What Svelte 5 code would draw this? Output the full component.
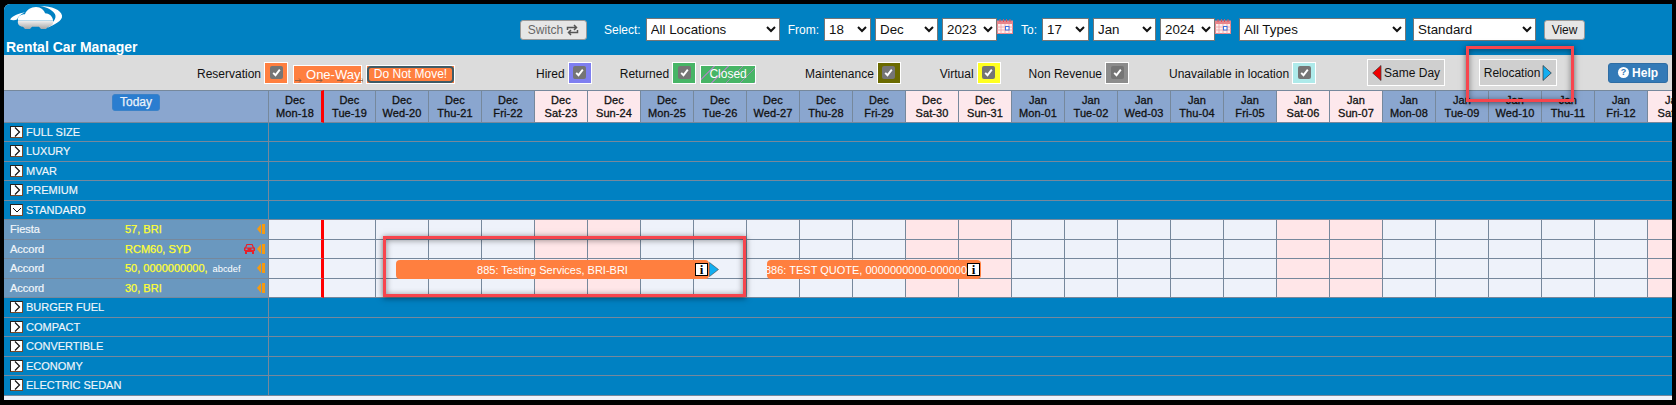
<script lang="ts">
const monthNames = ["Jan", "Feb", "Mar", "Apr", "May", "Jun", "Jul", "Aug", "Sep", "Oct", "Nov", "Dec"]
const dayNames = ["Sun", "Mon", "Tue", "Wed", "Thu", "Fri", "Sat"]

// 27 days from the selected start date, the last one runs off the screen
const days = Array.from({ length: 27 }, (_, i) => {
  const d = new Date(Date.UTC(2023, 11, 18 + i))
  const dow = d.getUTCDay()
  return {
    month: monthNames[d.getUTCMonth()],
    label: `${dayNames[dow]}-${String(d.getUTCDate()).padStart(2, "0")}`,
    weekend: dow === 0 || dow === 6,
  }
})

const before = ["FULL SIZE", "LUXURY", "MVAR", "PREMIUM"]
const after = ["BURGER FUEL", "COMPACT", "CONVERTIBLE", "ECONOMY", "ELECTRIC SEDAN"]
const cars = [
  { name: "Fiesta", info: "57, BRI", note: "", rental: false },
  { name: "Accord", info: "RCM60, SYD", note: "", rental: true },
  { name: "Accord", info: "50, 0000000000,", note: "abcdef", rental: false },
  { name: "Accord", info: "30, BRI", note: "", rental: false },
]

const legend = [
  { label: "Hired", cls: "hired" },
  { label: "Returned", cls: "returned" },
]
</script>

{#snippet check()}
  <span class="check">
    <svg width="9" height="9" viewBox="0 0 9 9"><path d="M1.2 4.8 3.5 7.2 7.8 1.6" fill="none" stroke="#fff" stroke-width="1.9" /></svg>
  </span>
{/snippet}

{#snippet calendar()}
  <svg class="cal" width="16" height="15" viewBox="0 0 16 15">
    <rect x="0.5" y="2" width="15" height="12.500" fill="#fdeeee" stroke="#e8858b" />
    <rect x="0.5" y="2" width="15" height="3" fill="#e8858b" />
    <path d="M3 0v3M6.500 0v3M9.500 0v3M13 0v3" stroke="#d8545c" />
    <path d="M0 8h16M0 11h16M4 5v10M8 5v10M12 5v10" stroke="#ee9ea2" stroke-width="0.8" />
    <rect x="8.500" y="7.500" width="3.500" height="3.500" fill="#fff" stroke="#3a6fe0" />
  </svg>
{/snippet}

{#snippet group(name: string, open: boolean)}
  <div class="group-name">
    <span class="toggle">
      <svg width="10" height="10" viewBox="0 0 10 10">
        {#if open}
          <path d="M1 3 5 7 9 3" fill="none" stroke="#111" stroke-width="1" />
        {:else}
          <path d="M3 0.500 7.500 5 3 9.500" fill="none" stroke="#111" stroke-width="1.200" />
        {/if}
      </svg>
    </span>
    {name}
  </div>
  <div class="group-rest"></div>
{/snippet}

<div class="shell">
  <header class="head">
    <div class="brand">
      <svg class="logo" width="54" height="26" viewBox="0 0 54 24" preserveAspectRatio="none">
        <defs>
          <linearGradient id="carbody" x1="0" y1="0" x2="0" y2="1">
            <stop offset="0" stop-color="#f2f2f2" />
            <stop offset="1" stop-color="#a8a8a8" />
          </linearGradient>
        </defs>
        <path d="M0 13C3 9 9 7 15 6 11 8 8 10 7 13 5 14 2 14 0 13Z" fill="#fff" />
        <path d="M30 0C42 0 51 4 52 9 53 14 44 18 37 21 43 16 47 12 45 8 43 4 37 1 30 0Z" fill="#fff" />
        <path d="M8 14C7 10 11 8 15 8 16 4 21 1 26 1 31 1 34 4 35 7 39 7 43 10 43 14Z" fill="#fff" />
        <path d="M8 14H43C44 18 41 20 38 20L36 22H31L29 20H22L20 22H15L13 20C10 20 7 18 8 14Z" fill="url(#carbody)" />
      </svg>
      <div class="app-name">Rental Car Manager</div>
    </div>

    <button class="btn switch">
      Switch
      <svg width="13" height="12" viewBox="0 0 13 12">
        <path d="M1.500 6V3.500H9.500M8 1 10.500 3.500 8 6M11.500 6V8.500H3.500M5 6 2.500 8.500 5 11" fill="none" stroke="#555" stroke-width="1.500" />
      </svg>
    </button>
    <span class="lbl l-select">Select:</span>
    <select class="s-loc"><option>All Locations</option></select>
    <span class="lbl l-from">From:</span>
    <select class="s-day"><option>18</option></select>
    <select class="s-mon"><option>Dec</option></select>
    <select class="s-year"><option>2023</option></select>
    {@render calendar()}
    <span class="lbl l-to">To:</span>
    <select class="s-day"><option>17</option></select>
    <select class="s-mon"><option>Jan</option></select>
    <select class="s-year"><option>2024</option></select>
    {@render calendar()}
    <select class="s-type"><option>All Types</option></select>
    <select class="s-class"><option>Standard</option></select>
    <button class="btn view">View</button>
  </header>

  <div class="legend">
    <span class="text first">Reservation</span>
    <span class="swatch res">{@render check()}</span>
    <span class="oneway">
      One-Way
      <svg class="arrows" width="69" height="6">
        <defs>
          <pattern id="arrow" width="21" height="6" patternUnits="userSpaceOnUse">
            <path d="M1 3.500H7M5 1.500 7 3.500 5 5.500" fill="none" stroke="#7a5a44" stroke-width="0.8" />
          </pattern>
        </defs>
        <rect width="69" height="6" fill="url(#arrow)" />
      </svg>
    </span>
    <span class="donot"><span>Do Not Move!</span></span>

    {#each legend as item}
      <span class="text {item.cls}">{item.label}</span>
      <span class="swatch sw-{item.cls}">{@render check()}</span>
    {/each}
    <span class="closed">Closed</span>

    <span class="text maint">Maintenance</span>
    <span class="swatch sw-maint">{@render check()}</span>
    <span class="text virtual">Virtual</span>
    <span class="swatch sw-virtual">{@render check()}</span>
    <span class="text nonrev">Non Revenue</span>
    <span class="swatch sw-nonrev">{@render check()}</span>
    <span class="text unavail">Unavailable in location</span>
    <span class="swatch sw-unavail">{@render check()}</span>

    <span class="jump sameday">
      <svg width="10" height="16" viewBox="0 0 10 16"><path d="M9 .5V15.500L.7 8Z" fill="#f00000" stroke="#333" stroke-width="0.7" /></svg>
      Same Day
    </span>
    <span class="jump relocation">
      Relocation
      <svg width="10" height="16" viewBox="0 0 10 16"><path d="M1 .5V15.500L9.300 8Z" fill="#12aef0" stroke="#333" stroke-width="0.7" /></svg>
    </span>
    <button class="help"><span class="qmark">?</span>Help</button>
  </div>

  <div class="board">
    <div class="corner"><span class="today">Today</span></div>
    {#each days as day, i}
      <div class="date" class:weekend={day.weekend} class:now={i === 0}>
        <span>{day.month}</span>
        <span>{day.label}</span>
      </div>
    {/each}

    {#each before as name}
      {@render group(name, false)}
    {/each}
    {@render group("STANDARD", true)}

    {#each cars as car}
      <div class="car">
        <span class="car-name">{car.name}</span>
        <span class="car-info">{car.info}{#if car.note}<small>{car.note}</small>{/if}</span>
        {#if car.rental}
          <svg class="rental" width="11" height="10" viewBox="0 0 11 10">
            <path d="M2.500 0H8.500L10 3.500H11V7H10V10H8V8H3V10H1V7H0V3.500H1ZM3.300 1 2.300 3.500H8.700L7.700 1ZM1.500 4.500V6H3.500V4.500ZM7.500 4.500V6H9.500V4.500Z" fill="#e8202a" fill-rule="evenodd" />
          </svg>
        {/if}
        <svg class="back" width="8" height="10" viewBox="0 0 8 9" preserveAspectRatio="none"><path d="M4 0V9L0 4.500ZM5 0H8V9H5Z" fill="#f59a12" /></svg>
      </div>
      {#each days as day, i}
        <div class="cell" class:weekend={day.weekend} class:now={i === 0}></div>
      {/each}
    {/each}

    {#each after as name}
      {@render group(name, false)}
    {/each}

    <div class="bar bar-885">
      <span class="bar-text">885: Testing Services, BRI-BRI</span>
      <span class="info">i</span>
      <svg class="bar-arrow" width="10" height="15" viewBox="0 0 10 15"><path d="M.5.500V14.500L9.500 7.500Z" fill="#12aef0" stroke="#444" stroke-width="0.6" /></svg>
    </div>
    <div class="bar bar-886">
      <span class="bar-text">886: TEST QUOTE, 0000000000-0000000000</span>
      <span class="info">i</span>
    </div>
  </div>

  <div class="mark mark-relocation"></div>
  <div class="mark mark-bar"></div>
</div>

<style>
  :global(body) {
    margin: 0;
    background: #000;
    overflow: hidden;
  }

  .shell {
    position: relative;
    box-sizing: border-box;
    width: 1668px;
    height: 396px;
    margin: 4px 4px 5px;
    background: #eef2fa;
    border-top-left-radius: 6px;
    overflow: hidden;
    font-family: "Liberation Sans", Arial, sans-serif;
    font-size: 12px;
    color: #111;
  }

  /* top bar */
  .head {
    display: flex;
    align-items: center;
    height: 51px;
    background: #0081c2;
  }

  .brand {
    display: flex;
    flex-direction: column;
    width: 516px;
    height: 51px;
    flex: none;
  }

  .logo {
    margin: 2px 0 0 6px;
  }

  .app-name {
    margin: 8px 0 0 2px;
    font-size: 14px;
    line-height: 16px;
    font-weight: 700;
    color: #fff;
    white-space: nowrap;
  }

  .btn {
    box-sizing: border-box;
    padding: 0;
    height: 20px;
    border: 1px solid #999;
    border-radius: 3px;
    background: #e6e6e6;
    font-family: inherit;
    font-size: 12px;
    color: #333;
  }

  .switch {
    display: flex;
    align-items: center;
    justify-content: center;
    gap: 3px;
    width: 67px;
    color: #666;
  }

  .view {
    width: 41px;
    height: 20px;
    margin-left: 8px;
    color: #111;
  }

  .lbl {
    color: #fff;
    white-space: nowrap;
  }

  .l-select { margin-left: 17px; }
  .l-from { margin-left: 8px; }
  .l-to { margin-left: 8px; }

  select {
    box-sizing: border-box;
    height: 23px;
    flex: none;
    background: #fff;
    font-family: inherit;
    font-size: 13.33px;
    color: #111;
  }

  .s-loc { width: 134px; margin-left: 5px; }
  .s-day { width: 47px; margin-left: 5px; }
  .s-mon { width: 63px; margin-left: 4px; }
  .s-year { width: 55px; margin-left: 4px; }
  .s-type { width: 167px; margin-left: 8px; }
  .s-class { width: 123px; margin-left: 7px; }

  .cal {
    flex: none;
    align-self: flex-start;
    margin-top: 15px;
  }

  /* legend strip */
  .legend {
    display: flex;
    align-items: center;
    box-sizing: border-box;
    height: 35px;
    background: #dcdcdc;
    white-space: nowrap;
  }

  .text {
    margin-top: 3px;
    margin-right: 3px;
    flex: none;
  }

  .first { margin-left: 193px; }
  .hired { margin-left: 81px; }
  .returned { margin-left: 28px; }
  .maint { margin-left: 49px; }
  .virtual { margin-left: 39px; }
  .nonrev { margin-left: 28px; }
  .unavail { margin-left: 40px; }

  .swatch {
    box-sizing: border-box;
    display: flex;
    justify-content: center;
    width: 24px;
    height: 22px;
    padding-top: 3px;
    flex: none;
    border: 1px solid #fff;
    background: #ff7f3f;
  }

  .sw-hired { background: #7f7ff0; }
  .sw-returned { background: #47b566; }
  .sw-maint { background: #6b6a00; }
  .sw-virtual { background: #ffff20; }
  .sw-nonrev { background: #8c8c8c; }
  .sw-unavail { background: #aeeaea; }

  .check {
    display: flex;
    align-items: center;
    justify-content: center;
    width: 13px;
    height: 13px;
    border-radius: 2px;
    background: #757575;
  }

  .oneway {
    position: relative;
    box-sizing: border-box;
    width: 69px;
    height: 19px;
    margin: 3px 0 0 5px;
    padding-left: 12px;
    flex: none;
    border: 1px solid #fff;
    background: #ff7f3f;
    font-size: 13px;
    line-height: 17px;
    color: #fff;
  }

  .arrows {
    position: absolute;
    left: 0;
    bottom: 0;
  }

  .donot {
    box-sizing: border-box;
    width: 89px;
    height: 19px;
    margin: 3px 0 0 4px;
    flex: none;
    border: 1px solid #fff;
    background: #ff7f3f;
    color: #fff;
  }

  .donot span {
    display: block;
    height: 17px;
    box-sizing: border-box;
    border: 2px solid #3e5b66;
    border-radius: 4px;
    text-align: center;
    line-height: 13px;
  }

  .closed {
    box-sizing: border-box;
    width: 56px;
    height: 19px;
    margin: 3px 0 0 4px;
    flex: none;
    border: 1px solid #fff;
    background: repeating-linear-gradient(135deg, #47b566 0 9px, #9a8fb0 9px 10px);
    text-align: center;
    line-height: 17px;
    color: #fff;
  }

  .jump {
    display: flex;
    align-items: center;
    justify-content: center;
    gap: 2px;
    box-sizing: border-box;
    width: 78px;
    height: 27px;
    flex: none;
    border: 1px solid #fff;
    background: #cfcfcf;
  }

  .sameday { margin-left: 51px; }
  .relocation { margin-left: 34px; }

  .help {
    display: flex;
    align-items: center;
    justify-content: center;
    gap: 3px;
    box-sizing: border-box;
    width: 60px;
    height: 20px;
    margin-left: 51px;
    padding: 0;
    border: 1px solid #2e6da4;
    border-radius: 3px;
    background: #337ab7;
    font-family: inherit;
    font-size: 12px;
    font-weight: 700;
    color: #fff;
  }

  .qmark {
    width: 11px;
    height: 11px;
    border-radius: 50%;
    background: #fff;
    color: #337ab7;
    font-size: 9px;
    line-height: 11px;
    text-align: center;
  }

  /* schedule grid */
  .board {
    position: relative;
    display: grid;
    grid-template-columns: 265px 55px 52px repeat(25, 53px);
    grid-auto-rows: 19.5px;
    grid-template-rows: 32.5px;
    background: #0081c2;
  }

  .corner {
    display: flex;
    justify-content: center;
    padding-top: 3px;
    background: #8aa6cf;
    border-top: 1px solid #76889c;
    border-right: 1px solid #76889c;
    border-bottom: 1px solid #76889c;
    box-sizing: border-box;
  }

  .today {
    box-sizing: border-box;
    width: 48px;
    height: 17px;
    border: 1px solid #3b82c8;
    border-radius: 3px;
    background: #2a7dd0;
    color: #eaf2fa;
    text-align: center;
    line-height: 14px;
    -webkit-text-stroke: 0.25px #eaf2fa;
  }

  .date {
    box-sizing: border-box;
    display: flex;
    flex-direction: column;
    align-items: center;
    padding-top: 3px;
    border-top: 1px solid #76889c;
    border-right: 1px solid #76889c;
    border-bottom: 1px solid #76889c;
    background: #8aa6cf;
    font-size: 11px;
    line-height: 13px;
    color: #111;
    -webkit-text-stroke: 0.3px #111;
    letter-spacing: 0.1px;
  }

  .date.weekend {
    background: #fde8ec;
  }

  .now {
    border-right: 3px solid #f00;
  }

  .date.now {
    border-right-color: #f00;
  }

  .group-name {
    display: flex;
    align-items: center;
    gap: 3px;
    padding-left: 6px;
    box-sizing: border-box;
    border-right: 1px solid #76889c;
    border-bottom: 1px solid #76889c;
    background: #0081c2;
    font-size: 11px;
    color: #f2f6fa;
    white-space: nowrap;
    -webkit-text-stroke: 0.15px #f2f6fa;
  }

  .group-rest {
    grid-column: 2 / -1;
    box-sizing: border-box;
    border-bottom: 1px solid #76889c;
  }

  .toggle {
    display: flex;
    align-items: center;
    justify-content: center;
    box-sizing: border-box;
    width: 13px;
    height: 12px;
    background: #fff;
    border: 1px solid #222;
    border-right-color: #7a4a2a;
    border-bottom-color: #7a4a2a;
  }

  .car {
    display: flex;
    align-items: center;
    padding: 0 3px 0 6px;
    box-sizing: border-box;
    border-right: 1px solid #76889c;
    border-bottom: 1px solid #76889c;
    background: #6a98bf;
    white-space: nowrap;
  }

  .car-name {
    width: 115px;
    flex: none;
    font-size: 11px;
    color: #f2f6fa;
    -webkit-text-stroke: 0.2px #f2f6fa;
  }

  .car-info {
    font-size: 11px;
    color: #ffff33;
    -webkit-text-stroke: 0.25px #ffff33;
  }

  .car-info small {
    margin-left: 5px;
    font-size: 9.3px;
    color: #fff;
    -webkit-text-stroke: 0;
  }

  .rental {
    margin-left: auto;
    margin-right: 2px;
  }

  .back {
    margin-left: auto;
    flex: none;
  }

  .rental + .back {
    margin-left: 0;
  }

  .cell {
    box-sizing: border-box;
    border-right: 1px solid #76889c;
    border-bottom: 1px solid #76889c;
    background: #eef2fa;
  }

  .cell.weekend {
    background: #ffe6e8;
  }

  .cell.now {
    border-right: 3px solid #f00;
  }

  /* reservations lying over the grid */
  .bar {
    position: absolute;
    top: 170px;
    display: flex;
    align-items: center;
    box-sizing: border-box;
    height: 19px;
    border-radius: 4px;
    background: #ff7f3f;
    color: #fff;
    font-size: 11px;
    white-space: nowrap;
  }

  .bar-885 {
    left: 392px;
    width: 313px;
  }

  .bar-885 .bar-text {
    flex: 1;
    padding-left: 14px;
    text-align: center;
  }

  .bar-886 {
    left: 763px;
    width: 214px;
  }

  .bar-886 .bar-text {
    flex: 1;
    min-width: 0;
    overflow: hidden;
    text-indent: -2px;
  }

  .info {
    box-sizing: border-box;
    width: 13px;
    height: 13px;
    flex: none;
    margin-right: 1px;
    border: 1px solid #000;
    background: #fff;
    font-family: "Liberation Serif", serif;
    font-size: 13px;
    font-weight: 700;
    line-height: 11px;
    text-align: center;
    color: #000;
  }

  .bar-arrow {
    position: absolute;
    left: 313px;
    top: 2px;
  }

  /* red annotation boxes drawn on the screenshot */
  .mark {
    position: absolute;
    box-sizing: border-box;
    border: 3px solid #f7454d;
    box-shadow: 0 1px 6px rgba(0, 0, 0, 0.55), inset 0 1px 6px rgba(0, 0, 0, 0.45);
  }

  .mark-relocation {
    left: 1462px;
    top: 42px;
    width: 108px;
    height: 56px;
  }

  .mark-bar {
    left: 379px;
    top: 232px;
    width: 363px;
    height: 61px;
  }
</style>
